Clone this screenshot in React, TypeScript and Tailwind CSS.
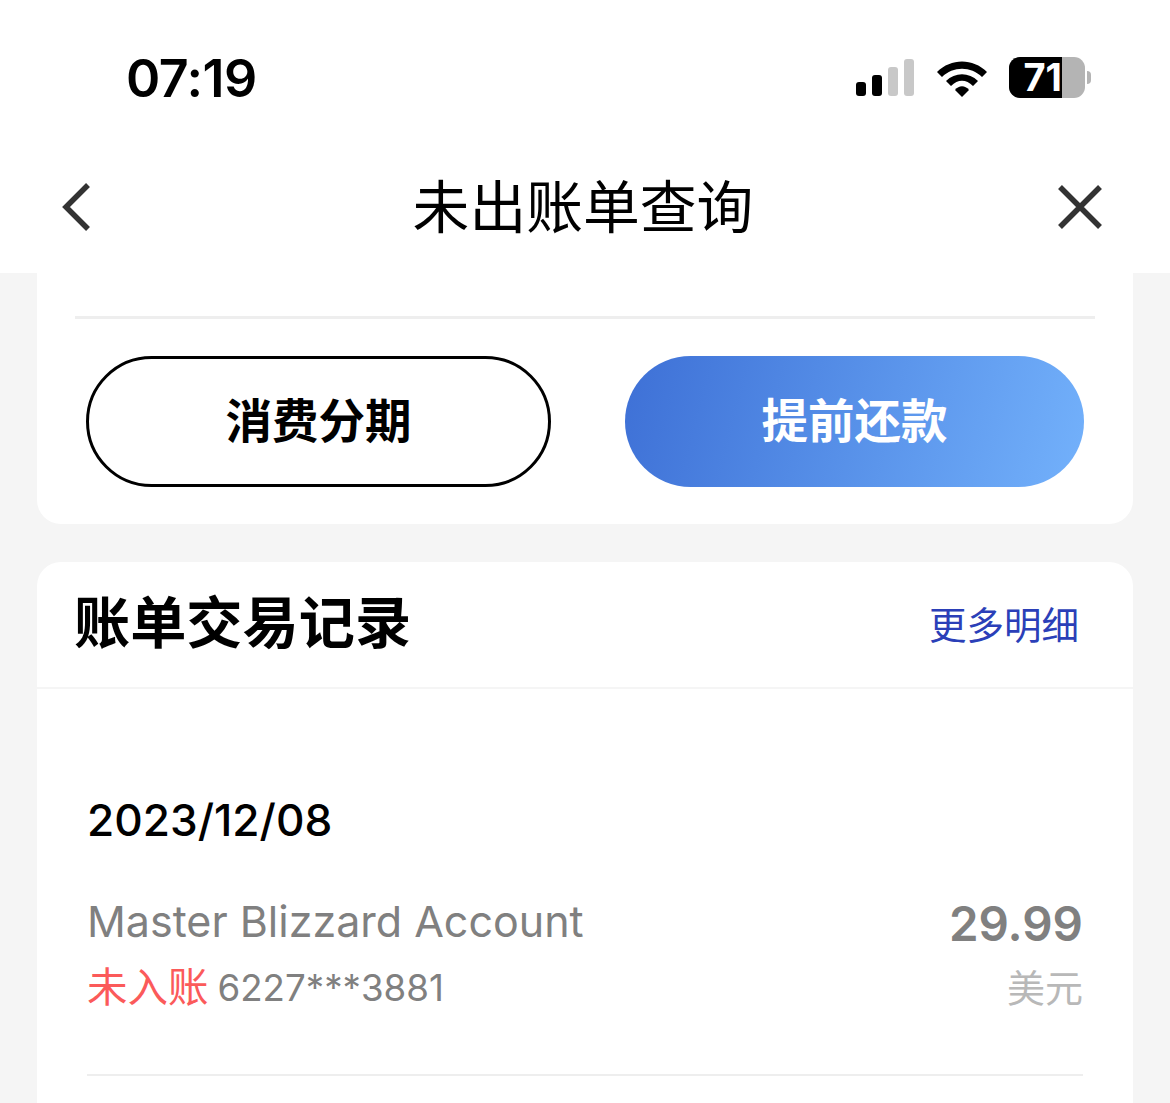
function StatusBar() {
  return (
    <div className="flex h-[155px] items-start justify-between pl-[126px] pr-[79px] pt-[48px]">
      <span className="font-['Inter',sans-serif] text-[52px] font-semibold leading-[62px] tracking-[-0.5px] text-black">
        07:19
      </span>
      <div className="flex items-center pt-[9px]">
        <div className="flex h-[37px] items-end gap-[6px]">
          <div className="h-[14px] w-[10px] rounded-[3px] bg-black" />
          <div className="h-[21px] w-[10px] rounded-[3px] bg-black" />
          <div className="h-[29px] w-[10px] rounded-[3px] bg-[#c8c8c8]" />
          <div className="h-[37px] w-[10px] rounded-[3px] bg-[#c8c8c8]" />
        </div>
        <svg className="ml-[22px]" width="52" height="38" viewBox="0 0 52 38">
          <path d="M1 13 C15 -1 37 -1 51 13 L46 18 C35 7 17 7 6 18 Z" fill="#000" />
          <path d="M10 22 C19 13 33 13 42 22 L37 27 C30 20 22 20 15 27 Z" fill="#000" />
          <path d="M19 31 C23 26 29 26 33 31 L26 38 Z" fill="#000" />
        </svg>
        <div className="ml-[21px] flex items-center">
          <div className="h-[41px] w-[76px] rounded-[11px] bg-[#b4b4b4]">
            <div className="flex h-full w-[53px] justify-end rounded-l-[11px] bg-black">
              <span className="font-['Inter',sans-serif] text-[38px] font-bold leading-[41px] text-white whitespace-nowrap">
                71
              </span>
            </div>
          </div>
          <div className="ml-[2px] h-[13px] w-[4px] rounded-r-full bg-[#b4b4b4]" />
        </div>
      </div>
    </div>
  );
}

function NavBar() {
  return (
    <div className="flex h-[118px] items-start justify-between pl-[60px] pr-[67px] pt-[28px]">
      <svg width="32" height="48" viewBox="0 0 32 48">
        <path d="M28 2 L6 24 L28 46" fill="none" stroke="#333" strokeWidth="5.5" />
      </svg>
      <h1 className="-mt-[5px] ml-[17px] text-[56.8px] font-normal leading-[50px] text-black">未出账单查询</h1>
      <svg width="46" height="46" viewBox="0 0 46 46" className="mt-[1px]">
        <path d="M3 3 L43 43 M43 3 L3 43" fill="none" stroke="#333" strokeWidth="5.5" />
      </svg>
    </div>
  );
}

export default function App() {
  return (
    <div className="h-[1103px] w-[1170px] overflow-hidden bg-[#f5f5f5] font-['Noto_Sans_CJK_SC',sans-serif]">
      <div className="bg-white">
        <StatusBar />
        <NavBar />
      </div>

      <div className="mx-[37px] rounded-b-[24px] bg-white px-[38px] pb-[37px] pt-[43px]">
        <div className="h-[3px] bg-[#eeeeee]" />
        <div className="mt-[37px] flex justify-between px-[11px]">
          <button className="flex h-[131px] w-[465px] items-center justify-center rounded-full border-[3px] border-black bg-white pb-[8px] text-[46.5px] font-semibold text-black">
            消费分期
          </button>
          <button className="flex h-[131px] w-[459px] items-center justify-center rounded-full bg-linear-105 from-[#3e70d6] to-[#73b1fb] pb-[8px] text-[46.5px] font-semibold text-white">
            提前还款
          </button>
        </div>
      </div>

      <div className="mx-[37px] mt-[38px] h-[600px] rounded-t-[24px] bg-white">
        <div className="flex h-[127px] items-center justify-between border-b-2 border-[#f5f5f5] pl-[37px] pr-[54px]">
          <h2 className="mb-[12px] text-[56.2px] font-semibold leading-[64px] text-black">账单交易记录</h2>
          <a className="mb-[3px] text-[37.5px] font-normal leading-[50px] text-[#2b3fb8]">更多明细</a>
        </div>

        <div className="px-[50px]">
          <div className="pt-[104px] font-['Inter',sans-serif] text-[44.2px] font-medium leading-[54px] text-black">
            2023/12/08
          </div>
          <div className="mt-[47px] flex justify-between border-b-2 border-[#eeeeee] pb-[61px]">
            <div>
              <div className="font-['Inter',sans-serif] text-[43px] font-normal leading-[54px] text-[#808080]">
                Master Blizzard Account
              </div>
              <div className="mt-[12px] flex items-start leading-[50px]">
                <span className="text-[40.5px] leading-[50px] text-[#fb5a5a]">未入账</span>
                <span className="ml-[9px] mt-[3px] font-['Inter',sans-serif] text-[36.7px] leading-[50px] text-[#808080]">
                  6227***3881
                </span>
              </div>
            </div>
            <div className="flex flex-col items-end">
              <div className="mt-[3px] font-['Inter',sans-serif] text-[47.5px] font-semibold leading-[54px] text-[#808080]">
                29.99
              </div>
              <div className="mt-[10px] text-[38px] leading-[50px] text-[#b8b8b8]">美元</div>
            </div>
          </div>
        </div>
      </div>
    </div>
  );
}
